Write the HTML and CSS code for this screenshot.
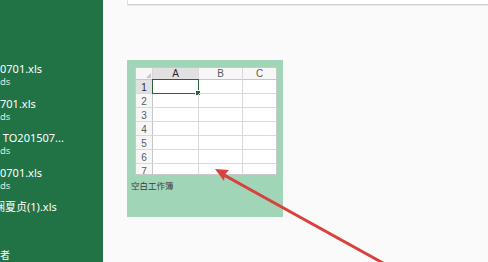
FILE: index.html
```html
<!DOCTYPE html>
<html lang="zh">
<head>
<meta charset="utf-8">
<link rel="stylesheet" href="styles.css">
</head>
<body>
<div class="page">
  <aside class="sidebar">
    <div class="recent">
      <div class="item"><div class="name">0701.xls</div><div class="sub">ds</div></div>
      <div class="item"><div class="name">701.xls</div><div class="sub">ds</div></div>
      <div class="item"><div class="name">&nbsp;TO201507...</div><div class="sub">ds</div></div>
      <div class="item"><div class="name">0701.xls</div><div class="sub">ds</div></div>
      <div class="item"><div class="name"><span class="cut">娴</span>夏贞(1).xls</div></div>
    </div>
    <div class="footer">者</div>
  </aside>
  <main class="main">
    <div class="topbox"></div>
    <div class="tile">
      <div class="sheet">
        <div class="corner"><span class="tri"></span></div>
        <div class="colh sel">A</div>
        <div class="colh">B</div>
        <div class="colh">C</div>

        <div class="rowh sel">1</div>
        <div class="cell active"><span class="handle"></span></div>
        <div class="cell"></div>
        <div class="cell"></div>

        <div class="rowh">2</div><div class="cell"></div><div class="cell"></div><div class="cell"></div>
        <div class="rowh">3</div><div class="cell"></div><div class="cell"></div><div class="cell"></div>
        <div class="rowh">4</div><div class="cell"></div><div class="cell"></div><div class="cell"></div>
        <div class="rowh">5</div><div class="cell"></div><div class="cell"></div><div class="cell"></div>
        <div class="rowh">6</div><div class="cell"></div><div class="cell"></div><div class="cell"></div>
        <div class="rowh">7</div><div class="cell"></div><div class="cell"></div><div class="cell"></div>
      </div>
      <div class="caption">空白工作簿</div>
    </div>
  </main>
</div>
<svg class="arrow" width="488" height="262" viewBox="0 0 488 262">
  <polygon points="384,264 381,262 224,173.5 225.5,176.5" fill="#d8413c"/>
  <line x1="383" y1="263" x2="222" y2="174" stroke="#d8413c" stroke-width="3"/>
  <polygon points="215,169 229,170 225,174.5 224,181" fill="#d8413c"/>
</svg>
</body>
</html>
```
FILE: styles.css
```css
html, body {
  margin: 0;
  padding: 0;
  width: 488px;
  height: 262px;
  overflow: hidden;
  background: #fafafa;
  font-family: "Noto Sans", "Noto Sans CJK SC", sans-serif;
}
.page {
  display: flex;
  width: 488px;
  height: 262px;
}
.sidebar {
  width: 103px;
  flex: none;
  background: #217346;
  color: #ffffff;
  overflow: hidden;
  display: flex;
  flex-direction: column;
  padding-top: 62px;
  box-sizing: border-box;
}
.recent {
  display: flex;
  flex-direction: column;
}
.item {
  height: 34.5px;
  display: flex;
  flex-direction: column;
}
.name {
  font-size: 11px;
  line-height: 14px;
  white-space: nowrap;
}
.cut {
  display: inline-block;
  width: 5px;
  overflow: hidden;
  direction: rtl;
  vertical-align: bottom;
}
.sub {
  font-size: 9.5px;
  line-height: 12px;
  color: #dbe9e0;
  white-space: nowrap;
}
.footer {
  margin-top: 13px;
  font-size: 10px;
  line-height: 14px;
  white-space: nowrap;
  font-family: "Noto Sans CJK SC", sans-serif;
}
.main {
  flex: 1;
  display: flex;
  flex-direction: column;
  padding-left: 24px;
}
.topbox {
  height: 4px;
  background: #ffffff;
  border-left: 1px solid #e2e2e2;
  border-bottom: 1px solid #cfcfcf;
  box-shadow: 0 1px 0 #ececec;
}
.tile {
  margin-top: 55px;
  width: 156px;
  height: 157px;
  box-sizing: border-box;
  background: #a1d5b8;
  padding: 7px 6px 0 8px;
  display: flex;
  flex-direction: column;
}
.sheet {
  width: 142px;
  height: 108px;
  overflow: hidden;
  background: #ffffff;
  border: 1px solid #c9c9c9;
  box-sizing: border-box;
  display: grid;
  grid-template-columns: 17px 46px 44px 34px;
  grid-template-rows: 12px repeat(7, 14px);
  font-family: "Liberation Sans", sans-serif;
}
.corner {
  background: #f6f6f6;
  border-right: 1px solid #d6d6d6;
  border-bottom: 1px solid #c6c6c6;
  position: relative;
}
.tri {
  position: absolute;
  right: 1px;
  bottom: 1px;
  width: 0;
  height: 0;
  border-left: 5px solid transparent;
  border-bottom: 5px solid #c8c8c8;
}
.colh {
  background: #f7f7f7;
  border-right: 1px solid #dadada;
  border-bottom: 1px solid #c6c6c6;
  font-size: 10px;
  line-height: 12px;
  text-align: center;
  color: #5a5a5a;
}
.colh.sel {
  background: #e1e1e1;
  color: #2a2a2a;
  border-bottom: 1px solid #217346;
}
.rowh {
  background: #f7f7f7;
  border-right: 1px solid #c6c6c6;
  border-bottom: 1px solid #dadada;
  font-size: 10px;
  line-height: 15px;
  text-align: center;
  color: #5a5a5a;
}
.rowh.sel {
  background: #e1e1e1;
  color: #2a2a2a;
}
.cell {
  border-right: 1px solid #dadada;
  border-bottom: 1px solid #dadada;
  position: relative;
}
.cell.active {
  border: 1.5px solid #2a5f3f;
  margin: -1px 0 0 -1px;
}
.handle {
  position: absolute;
  right: -3px;
  bottom: -3px;
  width: 4px;
  height: 4px;
  background: #2a5f3f;
  border: 1px solid #ffffff;
}
.caption {
  margin-top: 4px;
  font-size: 8.5px;
  line-height: 12px;
  color: #3d3d3d;
  font-family: "Noto Sans CJK SC", sans-serif;
  margin-left: -4px;
}
.arrow {
  position: absolute;
  left: 0;
  top: 0;
  pointer-events: none;
}
```
